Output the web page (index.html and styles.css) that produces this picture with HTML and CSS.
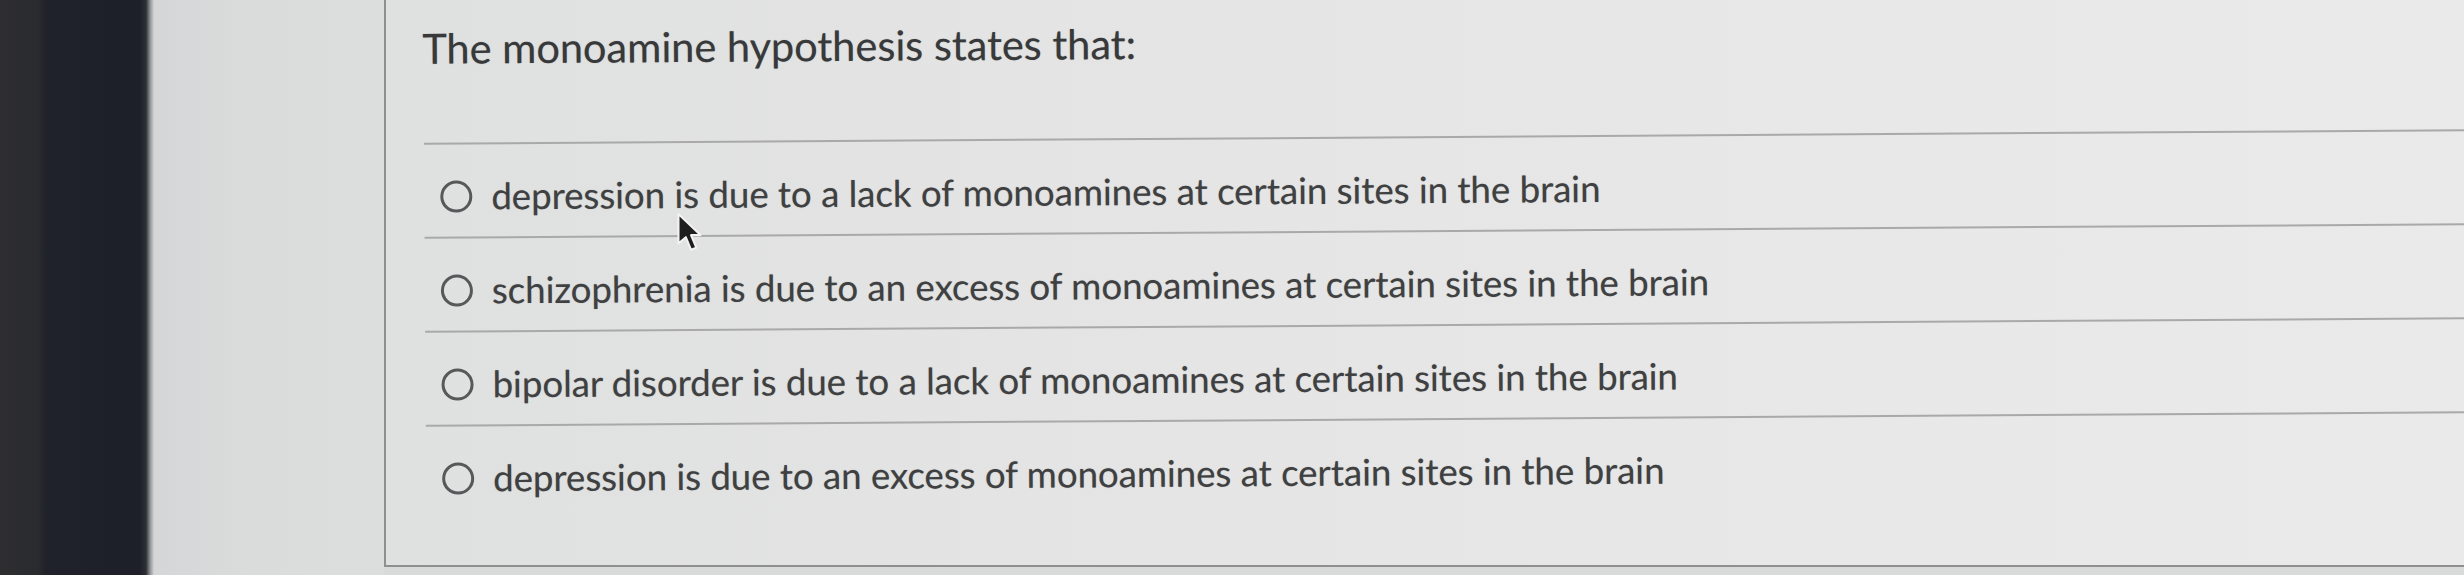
FILE: index.html
```html
<!DOCTYPE html>
<html lang="en">
<head>
<meta charset="utf-8">
<title>Quiz question</title>
<link rel="stylesheet" href="styles.css">
</head>
<body>
<div class="screen">
  <div class="bezel"></div>
  <div class="margin"></div>
  <div class="card">
    <div class="content">
      <h1 class="question">The monoamine hypothesis states that:</h1>
      <ul class="options">
        <li class="option"><span class="radio"></span><span class="label">depression is due to a lack of monoamines at certain sites in the brain</span></li>
        <li class="option"><span class="radio"></span><span class="label">schizophrenia is due to an excess of monoamines at certain sites in the brain</span></li>
        <li class="option"><span class="radio"></span><span class="label">bipolar disorder is due to a lack of monoamines at certain sites in the brain</span></li>
        <li class="option"><span class="radio"></span><span class="label">depression is due to an excess of monoamines at certain sites in the brain</span></li>
      </ul>
    </div>
  </div>
  <svg class="cursor" width="28" height="42" viewBox="0 0 26 40" aria-hidden="true">
    <path d="M2 2 L2 30 L9 24 L14 36 L19 34 L14 22 L23 22 Z" fill="#1e1e1e" stroke="#f2f2f2" stroke-width="2" stroke-linejoin="round"/>
  </svg>
</div>
</body>
</html>
```
FILE: styles.css
```css
html, body {
  margin: 0;
  padding: 0;
  width: 2464px;
  height: 575px;
  overflow: hidden;
  background: #d9dbdb;
}

.screen {
  position: relative;
  display: flex;
  width: 2464px;
  height: 575px;
  font-family: Lato, "Open Sans", sans-serif;
}

.bezel {
  width: 154px;
  flex: none;
  background: linear-gradient(90deg, #2e2e31 0px, #2a2b2e 38px, #1f222a 46px, #1d2029 140px, #2c3034 146px, #8d9192 150px, #d3d5d6 154px);
}

.margin {
  width: 230px;
  flex: none;
  background: linear-gradient(90deg, #d4d6d7 0%, #dadcdc 40%, #dcdddd 100%);
}

.card {
  flex: 1;
  height: 565px;
  border-left: 2px solid #8f8f8f;
  border-bottom: 2px solid #8f8f8f;
  background: linear-gradient(90deg, #dfe0e0 0%, #e4e4e4 30%, #e8e8e8 70%, #eaeaea 100%);
  overflow: hidden;
}

.content {
  padding: 23px 0 0 36px;
  transform: rotate(-0.38deg);
  transform-origin: 0 0;
}

.question {
  margin: 0;
  font-size: 41.5px;
  line-height: 50px;
  font-weight: 400;
  color: #38393a;
  text-shadow: 0 0 1px rgba(0, 0, 0, 0.3);
}

.options {
  list-style: none;
  margin: 70px 0 0 1px;
  padding: 0;
}

.option {
  display: flex;
  align-items: center;
  border-top: 2px solid #a9a9aa;
  padding: 28px 0 18px 16px;
  height: 46px;
}

.radio {
  flex: none;
  box-sizing: border-box;
  width: 32px;
  height: 32px;
  border: 3px solid #58585a;
  border-radius: 50%;
  margin-top: 2px;
  margin-right: 19px;
}

.label {
  font-size: 36.6px;
  line-height: 46px;
  color: #3f4041;
  white-space: nowrap;
  text-shadow: 0 0 1px rgba(0, 0, 0, 0.3);
}

.cursor {
  position: absolute;
  left: 676px;
  top: 212px;
}
```
